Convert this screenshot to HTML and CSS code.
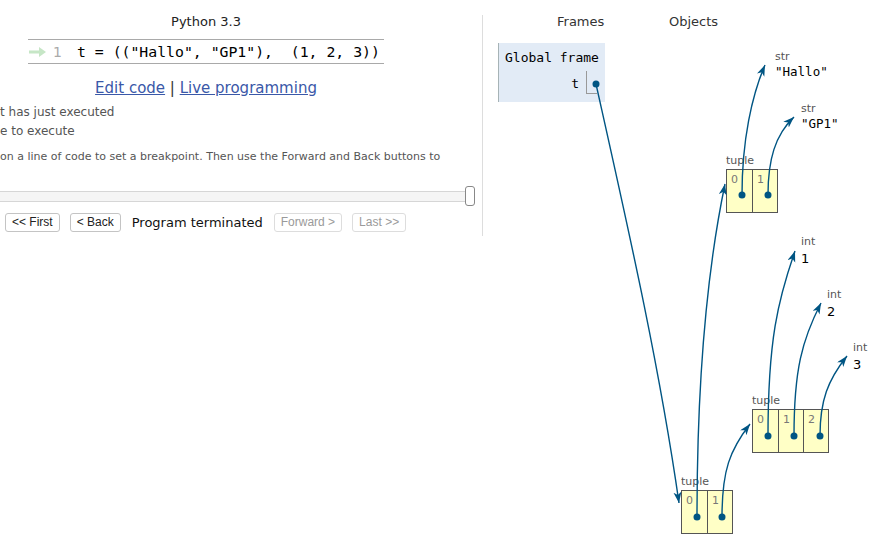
FILE: index.html
```html
<!DOCTYPE html>
<html>
<head>
<meta charset="utf-8">
<title>Python Tutor</title>
<link rel="stylesheet" href="styles.css">
</head>
<body>
<div class="page">
  <section class="left">
    <div class="center-col">
      <div class="lang">Python 3.3</div>
      <div class="code">
        <span class="cur-arrow"><svg width="18" height="10" viewBox="0 0 18 10"><rect x="0" y="3.5" width="11" height="3" fill="#c6e6c6"/><polygon points="10,0 17,5 10,10" fill="#c6e6c6"/></svg></span>
        <span class="lineno">1</span>
        <span class="src">t = (("Hallo", "GP1"),  (1, 2, 3))</span>
      </div>
      <div class="links"><a href="#">Edit code</a> | <a href="#">Live programming</a></div>
    </div>
    <div class="legend first">t has just executed</div>
    <div class="legend">e to execute</div>
    <div class="hint">on a line of code to set a breakpoint. Then use the Forward and Back buttons to</div>
    <div class="slider"><div class="track"></div><div class="handle"></div></div>
    <div class="controls">
      <button class="btn">&lt;&lt; First</button>
      <button class="btn">&lt; Back</button>
      <span class="status">Program terminated</span>
      <button class="btn disabled">Forward &gt;</button>
      <button class="btn disabled">Last &gt;&gt;</button>
    </div>
  </section>
  <section class="right">
    <div class="heads"><span class="h-frames">Frames</span><span class="h-objects">Objects</span></div>
    <div class="frame">
      <div class="frame-title">Global frame</div>
      <div class="frame-row"><span class="var">t</span><span class="val"></span></div>
    </div>
  </section>

  <div class="heap">
    <div class="obj prim" style="left:775px;top:50px"><div class="tlabel">str</div><div class="sval">"Hallo"</div></div>
    <div class="obj prim" style="left:801px;top:102px"><div class="tlabel">str</div><div class="sval">"GP1"</div></div>
    <div class="obj prim" style="left:801px;top:235px"><div class="tlabel">int</div><div class="ival">1</div></div>
    <div class="obj prim" style="left:827px;top:288px"><div class="tlabel">int</div><div class="ival">2</div></div>
    <div class="obj prim" style="left:853px;top:341px"><div class="tlabel">int</div><div class="ival">3</div></div>

    <div class="obj" style="left:726px;top:154px"><div class="tlabel">tuple</div>
      <div class="tuple"><div class="cell"><span class="idx">0</span></div><div class="cell"><span class="idx">1</span></div></div></div>
    <div class="obj" style="left:752px;top:394px"><div class="tlabel">tuple</div>
      <div class="tuple"><div class="cell"><span class="idx">0</span></div><div class="cell"><span class="idx">1</span></div><div class="cell"><span class="idx">2</span></div></div></div>
    <div class="obj" style="left:681px;top:475px"><div class="tlabel">tuple</div>
      <div class="tuple"><div class="cell"><span class="idx">0</span></div><div class="cell"><span class="idx">1</span></div></div></div>
  </div>

  <svg class="arrows" width="886" height="559" viewBox="0 0 886 559">
    <defs>
      <marker id="ah" markerUnits="userSpaceOnUse" markerWidth="12" markerHeight="10" refX="11" refY="4" orient="auto">
        <path d="M0,0 L11,4 L0,8 L3,4 z" fill="#005583"/>
      </marker>
    </defs>
    <g fill="none" stroke="#005583" stroke-width="1.4" marker-end="url(#ah)">
      <path d="M596,84 C627,223 659,363 679,503"/>
      <path d="M697,517 C697,400 705,280 725,184"/>
      <path d="M722,517 C722,470 730,450 750,424"/>
      <path d="M742,195 C742,140 752,95 765,65"/>
      <path d="M768,195 C768,160 775,135 794,117"/>
      <path d="M768,436 C768,340 778,300 795,251"/>
      <path d="M794,436 C794,370 802,340 821,303"/>
      <path d="M820,436 C820,400 828,380 847,356"/>
    </g>
    <g fill="#005583">
      <circle cx="596" cy="84" r="3.5"/>
      <circle cx="742" cy="195" r="3.5"/>
      <circle cx="768" cy="195" r="3.5"/>
      <circle cx="768" cy="436" r="3.5"/>
      <circle cx="794" cy="436" r="3.5"/>
      <circle cx="820" cy="436" r="3.5"/>
      <circle cx="697" cy="517" r="3.5"/>
      <circle cx="722" cy="517" r="3.5"/>
    </g>
  </svg>
</div>
</body>
</html>
```

FILE: styles.css
```css
* { box-sizing: border-box; }
html, body { margin: 0; padding: 0; background: #fff; }
body { font-family: "DejaVu Sans", Verdana, sans-serif; color: #333; }

.page { position: relative; width: 886px; height: 559px; display: flex; overflow: hidden; }

.left { width: 483px; flex: none; margin-top: 15px; height: 221px; border-right: 1px solid #ddd; }
.center-col { width: 412px; display: flex; flex-direction: column; align-items: center; }
.lang { font-size: 13px; line-height: 16px; margin-top: -1px; color: #222; }
.code { margin-top: 9px; width: 356px; height: 25px; border-top: 1px solid #a9a9a9; border-bottom: 1px solid #a9a9a9; display: flex; align-items: center; }
.cur-arrow { width: 25px; padding-left: 1px; display: flex; align-items: center; }
.lineno { font-size: 14px; color: #aaa; width: 24px; }
.src { font-family: "DejaVu Sans Mono", Menlo, monospace; font-size: 14.8px; color: #000; white-space: pre; }
.links { margin-top: 14px; font-size: 15px; line-height: 20px; color: #333; }
.links a { color: #3a58a8; text-decoration: underline; }

.legend { font-size: 12px; line-height: 19px; color: #555; }
.legend.first { margin-top: 5px; }
.hint { font-size: 11px; line-height: 14px; color: #555; margin-top: 9px; }

.slider { position: relative; width: 476px; height: 20px; margin-top: 22px; display: flex; align-items: center; }
.track { width: 470px; height: 11px; background: #f5f5f5; border-top: 1px solid #d6d6d6; border-bottom: 1px solid #d6d6d6; }
.handle { position: absolute; left: 465px; top: 0; width: 10px; height: 20px; border: 1px solid #888; border-radius: 3px; background: #fff; }

.controls { display: flex; align-items: center; margin-top: 6px; padding-left: 5px; height: 20px; }
.btn { font-family: "Liberation Sans", Arial, sans-serif; font-size: 12px; height: 19px; padding: 0 6px; background: #fff; color: #222; border: 1px solid #c4c4c4; border-radius: 3px; margin-right: 10px; line-height: 17px; }
.btn.disabled { color: #9a9a9a; border-color: #ddd; }
.status { font-size: 13px; color: #111; margin-right: 11px; margin-left: 1px; }

.right { flex: 1; position: relative; }
.heads { position: relative; height: 43px; font-size: 13px; color: #333; }
.heads span { position: absolute; top: 14px; line-height: 16px; }
.h-frames { left: 74px; }
.h-objects { left: 186px; }
.frame { margin-left: 15px; width: 107px; height: 59px; background: #e2ebf6; border-left: 1px solid #a6b3b6; font-family: "DejaVu Sans Mono", Menlo, monospace; font-size: 13px; color: #000; }
.frame-title { padding: 7px 0 0 6px; line-height: 16px; }
.frame-row { display: flex; justify-content: flex-end; margin-top: 5px; }
.var { line-height: 16px; margin-top: 5px; margin-right: 7px; }
.val { width: 11px; height: 23px; border-left: 1px solid #999; border-bottom: 1px solid #999; margin-right: 8px; }

.heap { position: absolute; inset: 0; }
.obj { position: absolute; }
.tlabel { font-size: 11px; line-height: 14px; color: #555; }
.sval { font-family: "DejaVu Sans Mono", Menlo, monospace; font-size: 12.5px; line-height: 16px; color: #000; }
.ival { font-size: 13px; line-height: 17px; color: #000; margin-top: 1px; }
.tuple { display: flex; margin-top: 1px; }
.cell { width: 26px; height: 44px; background: #ffffc6; border: 1px solid #555; margin-left: -1px; padding: 1px 0 0 4px; line-height: 14px; }
.cell:first-child { margin-left: 0; width: 27px; }
.idx { font-size: 11px; color: #777; }

.arrows { position: absolute; left: 0; top: 0; pointer-events: none; }
```
